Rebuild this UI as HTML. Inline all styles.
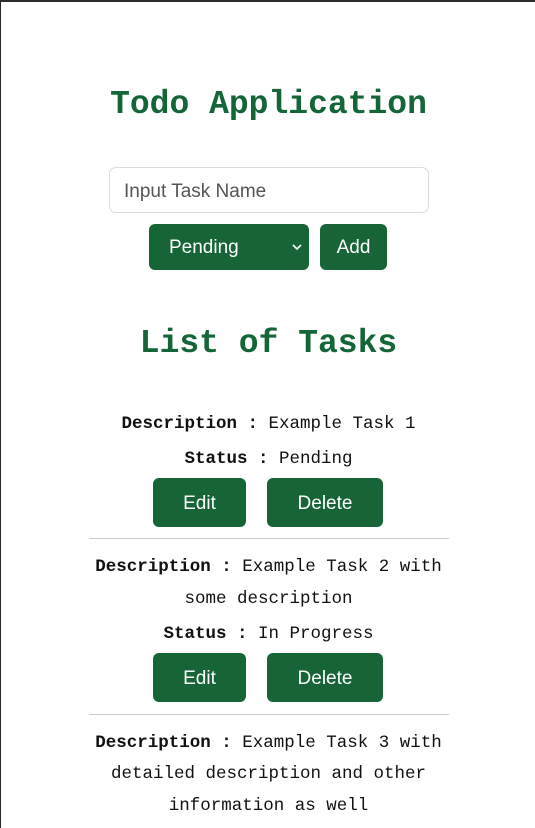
<!DOCTYPE html>
<html><head><style>
html,body{margin:0;padding:0;}
body{width:535px;height:828px;position:relative;overflow:hidden;background:#fff;font-family:"Liberation Sans",sans-serif;}
.bt{position:absolute;left:0;top:0;width:535px;height:2px;background:#2b2b2b;}
.bl{position:absolute;left:0;top:0;width:1px;height:828px;background:#2b2b2b;}
.a{position:absolute;}
h1{position:absolute;margin:0;left:0;width:537px;text-align:center;font-family:"Liberation Mono",monospace;font-weight:bold;font-size:33px;color:#146638;}
.btn{position:absolute;background:#176537;color:#fff;border-radius:6px;font-size:19px;display:flex;align-items:center;justify-content:center;padding-top:2px;box-sizing:border-box;}
.t{position:absolute;left:0;width:537px;text-align:center;font-family:"Liberation Mono",monospace;font-size:17.5px;color:#111;}
.t b{font-weight:bold;}
.hr{position:absolute;left:89px;width:360px;height:1px;background:#cfcfcf;}
</style></head><body>
<div class="bt"></div><div class="bl"></div>
<h1 style="top:86px">Todo Application</h1>
<div class="a" style="left:109px;top:167px;width:318px;height:44px;border:1px solid #dcdcdc;border-radius:7px;"></div>
<div class="a" style="left:124px;top:181px;font-size:19px;color:#555;">Input Task Name</div>
<div class="btn" style="left:149px;top:224px;width:160px;height:46px;justify-content:flex-start;"><span style="margin-left:20px">Pending</span>
<svg class="a" style="left:143px;top:19px" width="10" height="8" viewBox="0 0 10 8"><path d="M1 2l4 4 4-4" stroke="#fff" stroke-width="1.6" fill="none"/></svg></div>
<div class="btn" style="left:320px;top:224px;width:67px;height:46px;">Add</div>
<h1 style="top:325px">List of Tasks</h1>

<div class="t" style="top:414px"><b>Description :</b> Example Task 1</div>
<div class="t" style="top:449px"><b>Status :</b> Pending</div>
<div class="btn" style="left:153px;top:478px;width:93px;height:49px;">Edit</div>
<div class="btn" style="left:267px;top:478px;width:116px;height:49px;">Delete</div>
<div class="hr" style="top:538px"></div>

<div class="t" style="top:557px"><b>Description :</b> Example Task 2 with</div>
<div class="t" style="top:589px">some description</div>
<div class="t" style="top:624px"><b>Status :</b> In Progress</div>
<div class="btn" style="left:153px;top:653px;width:93px;height:49px;">Edit</div>
<div class="btn" style="left:267px;top:653px;width:116px;height:49px;">Delete</div>
<div class="hr" style="top:714px"></div>

<div class="t" style="top:733px"><b>Description :</b> Example Task 3 with</div>
<div class="t" style="top:764px">detailed description and other</div>
<div class="t" style="top:796px">information as well</div>
</body></html>
